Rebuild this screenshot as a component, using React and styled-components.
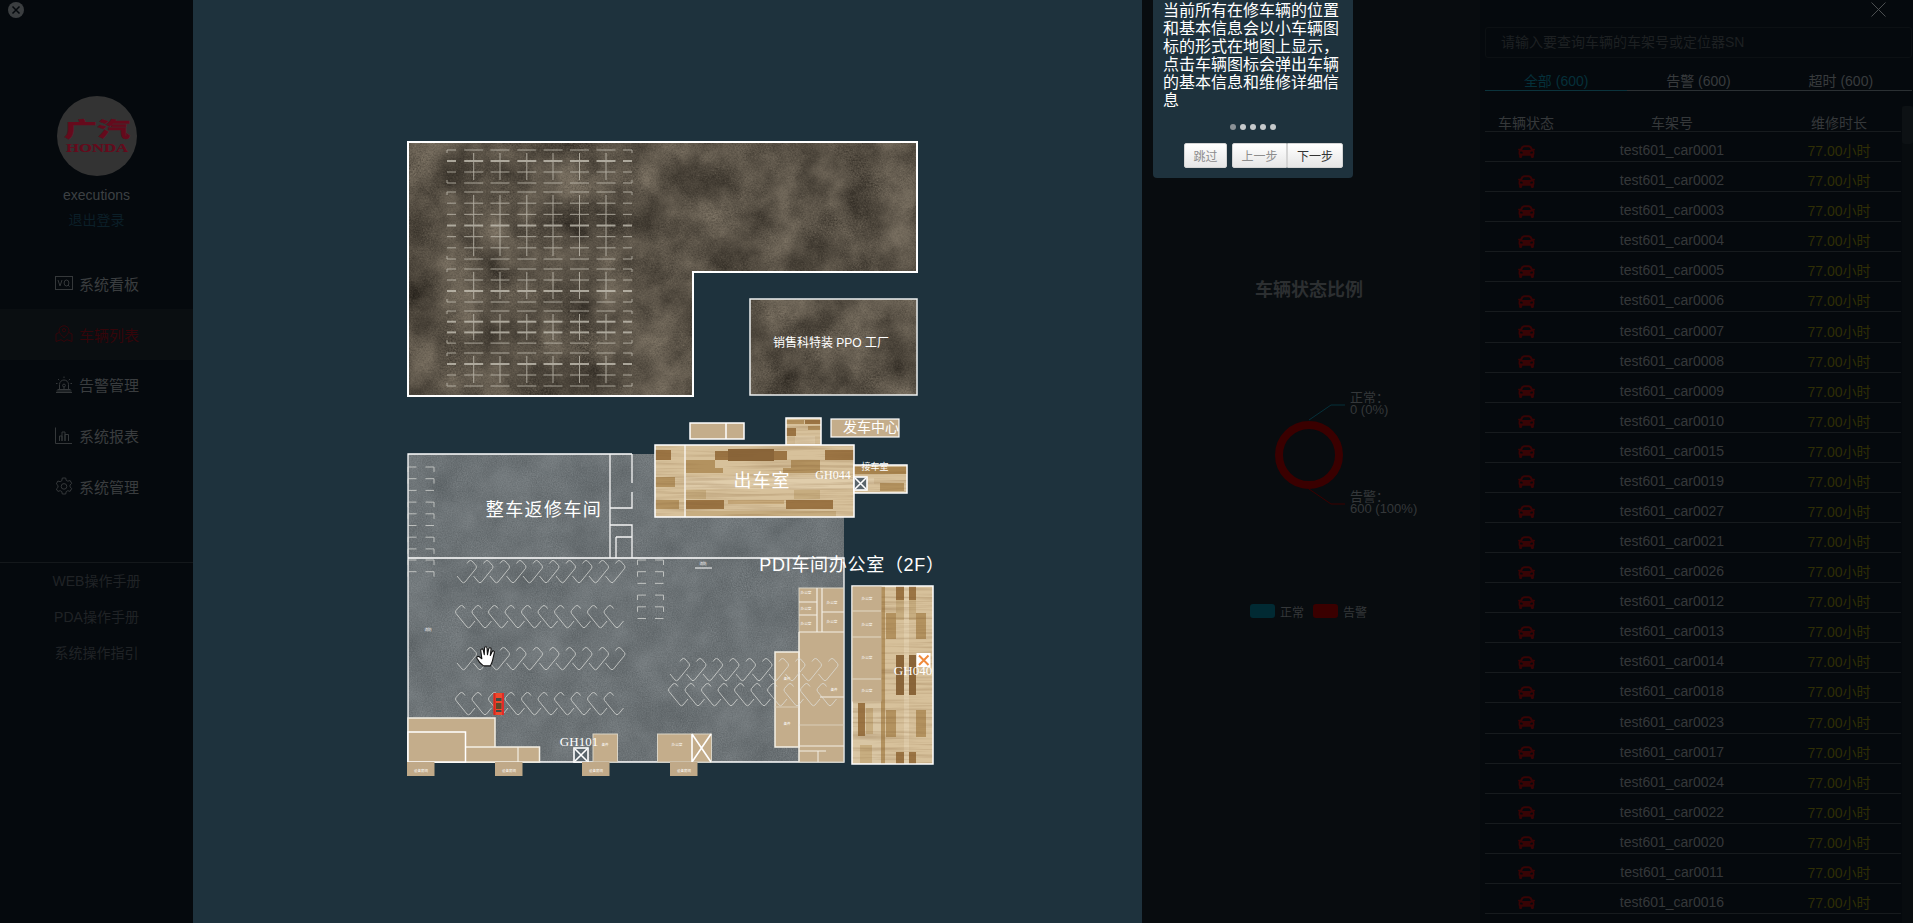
import React from 'react';
import styled, { createGlobalStyle } from 'styled-components';
import { FaCar } from 'react-icons/fa';

const SANS = '"Liberation Sans", "Noto Sans CJK SC", Arial, sans-serif';
const SERIF = '"Liberation Serif", "Noto Sans CJK SC", serif';

const MENU = [
  { label: '系统看板', icon: 'board' },
  { label: '车辆列表', icon: 'pin', active: true },
  { label: '告警管理', icon: 'alarm' },
  { label: '系统报表', icon: 'chart' },
  { label: '系统管理', icon: 'gear' },
];

const MANUALS = ['WEB操作手册', 'PDA操作手册', '系统操作指引'];

const TABS = ['全部 (600)', '告警 (600)', '超时 (600)'];

const CARS = [
  '0001', '0002', '0003', '0004', '0005', '0006', '0007', '0008', '0009', '0010', '0015', '0019', '0027',
  '0021', '0026', '0012', '0013', '0014', '0018', '0023', '0017', '0024', '0022', '0020', '0011', '0016',
];

const GlobalStyle = createGlobalStyle`
  html, body {
    margin: 0;
    padding: 0;
    height: 100%;
    background: #05090d;
    overflow: hidden;
  }
  * { box-sizing: border-box; }
`;

const Page = styled.div`
  position: relative;
  display: flex;
  width: 1913px;
  height: 923px;
  overflow: hidden;
  font-family: ${SANS};
`;

/* ---------- sidebar ---------- */
const Sidebar = styled.aside`
  position: relative;
  flex: 0 0 193px;
  display: flex;
  flex-direction: column;
  align-items: center;
  padding-top: 96px;
  background: #05090d;
`;

const CloseBadge = styled.div`
  position: absolute;
  left: 8px;
  top: 2px;
  width: 16px;
  height: 16px;
  border-radius: 50%;
  background: #3b3e40;
  display: flex;
  align-items: center;
  justify-content: center;
`;

const Avatar = styled.div`
  width: 80px;
  height: 80px;
  border-radius: 50%;
  background: #333333;
`;

const UserName = styled.div`
  margin-top: 9px;
  height: 20px;
  line-height: 20px;
  font-size: 14px;
  color: #3d4144;
`;

const Logout = styled.a`
  margin-top: 5px;
  height: 20px;
  line-height: 20px;
  font-size: 14px;
  color: #0b1f28;
`;

const Menu = styled.nav`
  align-self: stretch;
  margin-top: 28px;
  display: flex;
  flex-direction: column;
`;

const MenuItem = styled.div`
  height: 50.75px;
  padding-left: 55px;
  display: flex;
  align-items: center;
  gap: 6px;
  font-size: 15px;
  color: ${(p) => (p.$active ? '#34050a' : '#3a3d3f')};
  background: ${(p) => (p.$active ? '#0a0e11' : 'transparent')};
`;

const Manuals = styled.div`
  align-self: stretch;
  margin-top: 50px;
  border-top: 1px solid #14181b;
`;

const ManualLink = styled.div`
  height: 36px;
  line-height: 36px;
  text-align: center;
  font-size: 14px;
  color: #202326;
`;

/* ---------- map ---------- */
const MapArea = styled.main`
  flex: 0 0 949px;
  height: 923px;
  background: #1e323d;
`;

const MapSvg = styled.svg`
  display: block;
  width: 949px;
  height: 923px;
`;

const MapLabel = styled.text`
  fill: #fff;
  font-family: ${(p) => (p.$serif ? SERIF : SANS)};
  font-size: ${(p) => p.$size}px;
  letter-spacing: ${(p) => p.$spacing || 0}px;
  text-anchor: middle;
  dominant-baseline: central;
`;

/* ---------- status panel ---------- */
const StatusPanel = styled.section`
  flex: 0 0 338px;
  height: 923px;
  padding-top: 279px;
  display: flex;
  flex-direction: column;
  align-items: center;
  background: #080c0f;
`;

const PanelTitle = styled.h2`
  margin: 0 4px 0 0;
  height: 22px;
  line-height: 22px;
  font-size: 18px;
  font-weight: bold;
  color: #2c2f31;
`;

const ChartSvg = styled.svg`
  display: block;
  margin-top: 19px;
  width: 338px;
  height: 284px;
`;

const ChartText = styled.text`
  fill: #35383a;
  font-family: ${SANS};
  font-size: 13px;
`;

const Legend = styled.div`
  display: flex;
  align-items: center;
  align-self: flex-start;
  margin-left: 108px;
  height: 14px;
`;

const Swatch = styled.span`
  width: 25px;
  height: 14px;
  border-radius: 3px;
  background: ${(p) => p.$color};
`;

const LegendText = styled.span`
  margin: 0 9px 0 5px;
  font-size: 12px;
  color: #35383a;
`;

/* ---------- list panel ---------- */
const ListPanel = styled.section`
  position: relative;
  flex: 0 0 433px;
  height: 923px;
  padding: 27px 1px 0 5px;
  background: #05090d;
`;

const DismissIcon = styled.svg`
  position: absolute;
  right: 27px;
  top: 2px;
  width: 15px;
  height: 15px;
`;

const SearchBox = styled.div`
  height: 31px;
  line-height: 29px;
  padding-left: 15px;
  border: 1px solid #0c1013;
  border-radius: 3px;
  font-size: 14px;
  color: #1d2022;
`;

const TabBar = styled.div`
  display: flex;
  margin-top: 14px;
  border-bottom: 1px solid #2b3033;
`;

const Tab = styled.div`
  flex: 1;
  height: 19px;
  margin-bottom: -1px;
  text-align: center;
  line-height: 18px;
  font-size: 14px;
  color: ${(p) => (p.$active ? '#05303a' : '#383b3d')};
  border-bottom: 1px solid ${(p) => (p.$active ? '#0b333c' : 'transparent')};
`;

const ScrollTrack = styled.div`
  position: absolute;
  right: 0;
  top: 106px;
  bottom: 0;
  width: 11px;
  background: #080c0f;
`;

const ScrollThumb = styled.div`
  height: 38px;
  background: #0d1114;
  border-radius: 3px;
`;

const Table = styled.div`
  width: 416px;
  margin-top: 24px;
`;

const HeadRow = styled.div`
  display: grid;
  grid-template-columns: 82px 210px 124px;
  height: 17px;
  border-bottom: 1px solid #171b1e;
  font-size: 14px;
  line-height: 16px;
  text-align: center;
  color: #35383a;
`;

const Row = styled.div`
  display: grid;
  grid-template-columns: 82px 210px 124px;
  height: 30.09px;
  padding-top: 7px;
  align-items: center;
  border-bottom: 1px solid #171b1e;
  font-size: 14px;
  text-align: center;
  color: #35383a;
`;

const CarCell = styled.div`
  display: flex;
  justify-content: center;
  padding-top: 2px;
  color: #380405;
`;

const Hours = styled.div`
  color: #2f2e05;
`;

/* ---------- guide popover ---------- */
const Popover = styled.div`
  position: absolute;
  left: 1153px;
  top: -20px;
  width: 200px;
  height: 198px;
  padding: 22px 10px 0;
  border-radius: 4px;
  background: #1e323d;
`;

const PopoverText = styled.p`
  margin: 0;
  font-size: 16px;
  line-height: 18px;
  color: #fff;
`;

const Dots = styled.div`
  display: flex;
  justify-content: center;
  gap: 4px;
  margin-top: 14px;
`;

const Dot = styled.span`
  width: 6px;
  height: 6px;
  border-radius: 50%;
  background: ${(p) => (p.$current ? '#8b9196' : '#c6cacc')};
`;

const PopoverActions = styled.div`
  display: flex;
  justify-content: flex-end;
  gap: 5px;
  margin-top: 13px;
`;

const ButtonGroup = styled.div`
  display: flex;
`;

const GuideButton = styled.button`
  height: 25px;
  width: ${(p) => p.$width}px;
  padding: 0;
  font-family: ${SANS};
  font-size: 12px;
  color: ${(p) => (p.$muted ? '#8d8d8d' : '#333')};
  background: linear-gradient(#ffffff, #e6e6e6);
  border: 1px solid #d4d4d4;
  border-radius: ${(p) => p.$radius || '2px'};
`;

/* ---------- sidebar icons ---------- */
function MenuIcon({ name, color }) {
  const line = { fill: 'none', stroke: color, strokeWidth: 1 };
  return (
    <svg width="18" height="18" viewBox="0 0 18 18">
      {name === 'board' && (
        <>
          <rect x="0.5" y="2.5" width="17" height="13" {...line} />
          <path d="M3 6l2 6 2-6" {...line} />
          <ellipse cx="11.5" cy="9" rx="2.4" ry="3" {...line} />
          <path d="M13 11l1.5 1.5" {...line} />
        </>
      )}
      {name === 'pin' && (
        <>
          <path d="M9 .8c-3 0-5 2.2-5 4.8 0 2.6 3 5.4 5 7 2-1.6 5-4.4 5-7 0-2.6-2-4.8-5-4.8z" {...line} />
          <circle cx="9" cy="5.2" r="1.6" {...line} />
          <path d="M4 7.5L1 9v7.5l5-1.8 3 1.8 3-1.8 5 1.8V9l-3-1.5" {...line} />
        </>
      )}
      {name === 'alarm' && (
        <>
          <path d="M4.5 13V8.5a4.5 4.5 0 019 0V13" {...line} />
          <circle cx="9" cy="9.5" r="1.4" {...line} />
          <path d="M9 11v2M2.5 13.5h13M1 16.5h16M1.5 15h15M9 .5v1.5M3 3l1.2 1.2M15 3l-1.2 1.2M1 7.5h1.5M15.5 7.5H17" {...line} />
        </>
      )}
      {name === 'chart' && (
        <path d="M.5 .5v16h16.5M4.5 14V9h2.5v5M7 14V5h3v9M10 14V7.5h3.5V14" {...line} />
      )}
      {name === 'gear' && (
        <>
          <path d="M7.3 1h3.4l.5 2.3 1.6.9 2.3-.7 1.6 2.9-1.7 1.6v1.9l1.7 1.6-1.6 2.9-2.3-.7-1.6.9-.5 2.4H7.3l-.5-2.4-1.6-.9-2.3.7L1.3 12l1.7-1.6V8.5L1.3 6.9l1.6-2.9 2.3.7 1.6-.9z" {...line} />
          <circle cx="9" cy="9.4" r="2.8" {...line} />
        </>
      )}
    </svg>
  );
}

function BrandLogo() {
  return (
    <svg width="80" height="80" viewBox="0 0 80 80">
      <g transform="translate(40 41) scale(1 .62)">
        <text textAnchor="middle" fontFamily='"Noto Sans CJK SC", sans-serif' fontWeight="900" fontSize="33" fill="#650a1c" stroke="#650a1c" strokeWidth=".5" x="0" y="0">
          广汽
        </text>
      </g>
      <text x="9" y="56" textLength="62" lengthAdjust="spacingAndGlyphs" fontFamily={SERIF} fontWeight="bold" fontSize="12" fill="#650a1c" stroke="#650a1c" strokeWidth=".2">
        HONDA
      </text>
    </svg>
  );
}

/* ---------- map drawing parts ---------- */
function Filters() {
  return (
    <defs>
      <filter id="brownFloor" x="0" y="0" width="100%" height="100%" colorInterpolationFilters="sRGB">
        <feTurbulence type="fractalNoise" baseFrequency="0.025" numOctaves="4" seed="4" result="blotch" />
        <feTurbulence type="fractalNoise" baseFrequency="0.6" numOctaves="2" seed="7" result="grain" />
        <feComposite in="blotch" in2="grain" operator="arithmetic" k1="0" k2=".72" k3=".28" k4="0" />
        <feColorMatrix values=".5 0 0 0 .1  .47 0 0 0 .085  .42 0 0 0 .065  0 0 0 0 1" />
      </filter>
      <filter id="concreteFloor" x="0" y="0" width="100%" height="100%" colorInterpolationFilters="sRGB">
        <feTurbulence type="fractalNoise" baseFrequency="0.03" numOctaves="3" seed="9" result="blotch" />
        <feTurbulence type="fractalNoise" baseFrequency="0.8" numOctaves="2" seed="3" result="grain" />
        <feComposite in="blotch" in2="grain" operator="arithmetic" k1="0" k2=".5" k3=".5" k4="0" />
        <feColorMatrix values=".22 0 0 0 .315  .22 0 0 0 .34  .22 0 0 0 .352  0 0 0 0 1" />
      </filter>
      <filter id="woodGrain" x="0" y="0" width="100%" height="100%" colorInterpolationFilters="sRGB">
        <feTurbulence type="fractalNoise" baseFrequency="0.012 0.35" numOctaves="3" seed="2" />
        <feColorMatrix values="0 0 0 0 .5  0 0 0 0 .36  0 0 0 0 .2  .7 0 0 0 -.3" />
      </filter>
      <clipPath id="topHall">
        <path d="M408 142H917V272H693V396H408Z" />
      </clipPath>
      <clipPath id="annex">
        <rect x="750" y="299" width="167" height="96" />
      </clipPath>
      <clipPath id="lowerHall">
        <rect x="408" y="454" width="436" height="308" />
      </clipPath>
    </defs>
  );
}

// straight parking bays, the rows of little H shapes in the top hall
function StraightBays({ y, gaps, step = 11, heavy = [] }) {
  const cols = [473.7, 500, 526.8, 553, 579.5, 606];
  const last = y + gaps * step;
  const parts = [];
  for (let g = 0; g <= gaps; g++) {
    const yy = y + g * step;
    const width = heavy.includes(g) ? 2 : 1;
    cols.forEach((cx) => {
      parts.push(<path key={`${cx}-${g}`} d={`M${cx - 9.5} ${yy}H${cx + 9.5}`} strokeWidth={width} />);
    });
    parts.push(<path key={`l-${g}`} d={`M447 ${yy}H456`} strokeWidth={width} />);
    parts.push(<path key={`r-${g}`} d={`M623 ${yy}H632`} strokeWidth={width} />);
  }
  cols.forEach((cx) => {
    parts.push(<path key={`v-${cx}`} d={`M${cx} ${y + 3}V${last - 3}`} strokeWidth="1" />);
  });
  parts.push(<path key="cl" d={`M447 ${y}V${y + 3}M447 ${last - 3}V${last}`} strokeWidth="1" />);
  parts.push(<path key="cr" d={`M632 ${y}V${y + 3}M632 ${last - 3}V${last}`} strokeWidth="1" />);
  return (
    <g fill="none" stroke="#c9c5b9" opacity=".75">
      {parts}
    </g>
  );
}

// angled parking bays, S shaped hooks. flip=true gives the rows leaning the other way
function AngledBays({ x, y, count, pitch = 16.5, flip }) {
  const width = (count - 1) * pitch + 22;
  const items = [];
  for (let i = 0; i < count; i++) {
    const a = x + i * pitch;
    items.push(
      <path
        key={i}
        d={`M${a + 10} ${y + 3.5}L${a + 8} ${y + 1}Q${a + 6.5} ${y} ${a + 5} ${y + 1}L${a + 1} ${y + 5.5}Q${a} ${y + 7} ${a + 1} ${y + 8.5}L${a + 12} ${y + 22}Q${a + 13.5} ${y + 23.5} ${a + 15} ${y + 22}L${a + 20} ${y + 16}`}
      />
    );
  }
  const transform = flip ? `translate(${2 * x + width} 0) scale(-1 1)` : undefined;
  return (
    <g fill="none" stroke="#dfe0dc" strokeWidth="1" opacity=".72" transform={transform}>
      {items}
    </g>
  );
}

function SideBays({ x, y, count, step = 11.7 }) {
  const items = [];
  for (let i = 0; i <= count; i++) {
    const yy = y + i * step;
    items.push(<path key={i} d={`M${x + 8.5} ${yy}H${x}v${i % 3 === 2 ? 0 : 5}M${x + 17.5} ${yy}H${x + 26}v${i % 3 === 2 ? 0 : 5}`} />);
  }
  return (
    <g fill="none" stroke="#dfe0dc" strokeWidth="1" opacity=".7">
      {items}
    </g>
  );
}

function WoodPatch({ x, y, w, h, blocks, base = '#d7c19b', stroke = '#fff', id }) {
  return (
    <g>
      <clipPath id={id}>
        <rect x={x} y={y} width={w} height={h} />
      </clipPath>
      <g clipPath={`url(#${id})`}>
        <rect x={x} y={y} width={w} height={h} fill={base} />
        {blocks.map((b, i) => (
          <rect key={i} x={b[0]} y={b[1]} width={b[2]} height={b[3]} fill={b[4]} />
        ))}
        <rect x={x} y={y} width={w} height={h} filter="url(#woodGrain)" />
      </g>
      <rect x={x} y={y} width={w} height={h} fill="none" stroke={stroke} strokeWidth="1.5" />
    </g>
  );
}

const DARK = '#9b7443';
const MID = '#b3925f';
const LIGHT = '#e0cdab';

const EXIT_ROOM_WOOD = [
  [715, 451, 72, 9, DARK], [728, 449, 46, 12, '#8a6539'], [655, 450, 16, 10, DARK], [825, 450, 29, 10, DARK],
  [686, 460, 29, 13, MID], [791, 460, 29, 13, MID], [715, 468, 8, 5, MID], [783, 468, 8, 5, MID],
  [686, 477, 168, 12, LIGHT], [655, 477, 20, 10, MID],
  [686, 490, 20, 9, '#c7ad80'], [794, 490, 26, 9, '#c7ad80'],
  [686, 500, 38, 9, DARK], [786, 500, 47, 9, DARK], [655, 500, 24, 9, MID],
  [728, 500, 56, 4, '#c6a879'], [686, 511, 150, 6, '#c7ad80'],
];

const TOWER_WOOD = [
  [896, 586, 8, 14, DARK], [909, 586, 7, 14, DARK], [886, 613, 10, 26, MID], [916, 613, 10, 26, MID],
  [896, 655, 8, 40, '#8a6539'], [909, 655, 7, 40, '#8a6539'], [886, 710, 10, 27, MID], [916, 710, 10, 27, MID],
  [896, 752, 8, 12, DARK], [909, 752, 7, 12, DARK], [904, 586, 5, 178, LIGHT],
  [881, 586, 4, 178, MID], [896, 600, 8, 20, '#c7ad80'], [909, 600, 7, 20, '#c7ad80'],
  [852, 701, 29, 63, '#d9c6a4'], [858, 703, 7, 33, DARK], [866, 708, 7, 26, '#c7ad80'], [860, 745, 12, 18, '#c7ad80'],
];

const TAN = '#c4ad8b';

function TanRoom({ x, y, w, h, line = '#f3efe5', lineWidth = 1.5 }) {
  return <rect x={x} y={y} width={w} height={h} fill={TAN} stroke={line} strokeWidth={lineWidth} />;
}

function CrossBox({ x, y, size = 14 }) {
  return (
    <g fill="none" stroke="#fff" strokeWidth="1.6">
      <rect x={x} y={y} width={size} height={size} fill="#59646b" />
      <path d={`M${x + 1} ${y + 1}L${x + size - 1} ${y + size - 1}M${x + size - 1} ${y + 1}L${x + 1} ${y + size - 1}`} />
    </g>
  );
}

function ParkingMap() {
  return (
    <MapSvg viewBox="193 0 949 923">
      <Filters />

      {/* top hall */}
      <g clipPath="url(#topHall)">
        <rect x="408" y="142" width="509" height="254" filter="url(#brownFloor)" />
      </g>
      <path d="M408 142H917V272H693V396H408Z" fill="none" stroke="#fff" strokeWidth="2" />
      <StraightBays y={150} gaps={3} heavy={[1]} />
      <StraightBays y={192} gaps={6} step={11.17} heavy={[3]} />
      <StraightBays y={269} gaps={3} heavy={[2]} />
      <StraightBays y={311} gaps={3} step={10.7} heavy={[1, 2]} />
      <StraightBays y={353} gaps={3} heavy={[1]} />

      {/* annex */}
      <g clipPath="url(#annex)">
        <rect x="750" y="299" width="167" height="96" filter="url(#brownFloor)" />
      </g>
      <rect x="750" y="299" width="167" height="96" fill="none" stroke="#eef1f1" strokeWidth="1.5" />
      <MapLabel x="831" y="343" $size={12}>销售科特装 PPO 工厂</MapLabel>

      {/* lower hall */}
      <g clipPath="url(#lowerHall)">
        <rect x="408" y="454" width="436" height="308" filter="url(#concreteFloor)" />
      </g>
      <path d="M632 454H408V762H844V558H408" fill="none" stroke="#fff" strokeWidth="1.3" />
      <path d="M610 454V558M632 454V483M632 492V508H610M610 525H632V558M616 537H632M616 537V558" fill="none" stroke="#f4f4f4" strokeWidth="1.3" />
      <SideBays x={408} y={467} count={7} />
      <SideBays x={408} y={560} count={1} />
      <SideBays x={637.5} y={560} count={5} />
      <path d="M695 568H712" stroke="#fff" strokeWidth="1" />
      <MapLabel x="703" y="564" $size={3.6}>消防</MapLabel>
      <MapLabel x="428" y="630" $size={3.6}>消防</MapLabel>

      <AngledBays x={455} y={560} count={10} flip />
      <AngledBays x={455} y={605} count={10} />
      <AngledBays x={455} y={647} count={10} flip />
      <AngledBays x={455} y={692} count={10} />

      {/* rooms on the right of the lower hall */}
      <TanRoom x={799} y={588} w={44.5} h={174} line="#d8d3c6" lineWidth={1} />
      <TanRoom x={775} y={652} w={24} h={95} line="#f3efe5" />
      <path d="M775 707H799M799 725H844" stroke="#d9cdb8" strokeWidth="1" />
      <path d="M799 632V762M799 632H844M799 746H844M799 602H817M799 615H817M822 612H844M820 697H844M817 588V632M822 588V632" stroke="#f3efe5" strokeWidth="1.2" fill="none" />
      <path d="M799 751H826M818 751V762" stroke="#f3efe5" strokeWidth="1" fill="none" />
      <MapLabel x="806" y="593" $size={3.6}>办公室</MapLabel>
      <MapLabel x="806" y="609" $size={3.6}>办公室</MapLabel>
      <MapLabel x="806" y="624" $size={3.6}>办公室</MapLabel>
      <MapLabel x="832" y="603" $size={3.6}>办公室</MapLabel>
      <MapLabel x="832" y="622" $size={3.6}>办公室</MapLabel>
      <MapLabel x="787" y="679" $size={3.6}>备件</MapLabel>
      <MapLabel x="787" y="724" $size={3.6}>备件</MapLabel>
      <MapLabel x="834" y="690" $size={3.6}>备件</MapLabel>
      <AngledBays x={668} y={658} count={10} flip />
      <AngledBays x={668} y={683} count={10} />

      {/* bottom rooms */}
      <TanRoom x={408} y={718} w={87} h={44} line="#f3efe5" />
      <TanRoom x={465} y={747} w={74.5} h={15} />
      <path d="M518 747V762" stroke="#f3efe5" strokeWidth="1.2" />
      <rect x="408" y="732" width="57.5" height="30" fill={TAN} stroke="#fff" strokeWidth="1.5" />
      <TanRoom x={593} y={734} w={24.5} h={28} line="#d8d3c6" lineWidth={1} />
      <MapLabel x="605" y="745" $size={3.6}>备件</MapLabel>
      <TanRoom x={657.5} y={734} w={54} h={28} line="#d8d3c6" lineWidth={1} />
      <path d="M692 734V762M692 734L711 762M711 734L692 762" stroke="#fff" strokeWidth="1.6" fill="none" />
      <MapLabel x="677" y="745" $size={3.6}>办公室</MapLabel>
      <CrossBox x={574} y={748} />
      <MapLabel x="579" y="741" $size={13} $serif>GH101</MapLabel>
      {[407, 495, 582, 670].map((x) => (
        <g key={x}>
          <rect x={x} y={762} width={27.5} height={14} fill="#c0a988" />
          <MapLabel x={x + 14} y={771} $size={3.5}>设备房间</MapLabel>
        </g>
      ))}

      {/* wood rooms */}
      <rect x="690" y="423" width="54" height="16" fill={TAN} stroke="#fff" strokeWidth="1.5" />
      <path d="M726 423V439" stroke="#fff" strokeWidth="1.5" />
      <WoodPatch id="woodSquare" x={786} y={418} w={35} h={27} blocks={[[786, 420, 18, 4, MID], [805, 420, 16, 4, DARK], [786, 428, 10, 8, DARK], [808, 426, 13, 4, MID], [795, 436, 20, 9, LIGHT]]} />
      <rect x="831" y="419" width="68" height="18" fill={TAN} stroke="#fff" strokeWidth="1.2" />
      <MapLabel x="871" y="427" $size={14}>发车中心</MapLabel>
      <WoodPatch id="woodExit" x={655} y={445} w={199} h={72} blocks={EXIT_ROOM_WOOD} />
      <path d="M685 445V517" stroke="#fff" strokeWidth="1.2" />
      <MapLabel x="762" y="481" $size={18} $spacing={1}>出车室</MapLabel>
      <MapLabel x="833" y="475" $size={12} $serif>GH044</MapLabel>
      <WoodPatch id="woodPickup" x={854} y={465} w={53} h={28} blocks={[[854, 467, 53, 7, '#a9854f'], [880, 483, 24, 8, MID], [860, 478, 14, 6, LIGHT]]} />
      <MapLabel x="875" y="467" $size={9}>接车室</MapLabel>
      <CrossBox x={854} y={477} size={13} />
      <MapLabel x="544" y="510" $size={18} $spacing={1.4}>整车返修车间</MapLabel>

      {/* office tower */}
      <WoodPatch id="woodTower" x={852} y={586} w={81} h={178} blocks={TOWER_WOOD} />
      <rect x="852.5" y="586.5" width="29" height="115" fill={TAN} />
      <path d="M852 611H881M852 637H881M852 679H881" stroke="#e2d8c4" strokeWidth="1" />
      <MapLabel x="867" y="599" $size={3.6}>办公室</MapLabel>
      <MapLabel x="867" y="625" $size={3.6}>办公室</MapLabel>
      <MapLabel x="867" y="658" $size={3.6}>办公室</MapLabel>
      <MapLabel x="867" y="691" $size={3.6}>办公室</MapLabel>
      <MapLabel x="913" y="670" $size={13} $serif>GH040</MapLabel>
      <rect x="916.5" y="653" width="14" height="14" fill="#fff" />
      <path d="M919 655.5L928.5 665M928.5 655.5L919 665" stroke="#f08a3c" strokeWidth="2" />
      <MapLabel x="852" y="565" $size={18} $spacing={0.7}>PDI车间办公室（2F）</MapLabel>

      {/* car marker */}
      <rect x="493.5" y="693" width="10.5" height="22" rx="2" fill="#ef4a2c" />
      <rect x="493.5" y="693" width="2" height="22" fill="#d8261f" />
      <rect x="502" y="693" width="2" height="22" fill="#e02a2a" />
      <rect x="496" y="698" width="5.5" height="3" fill="#3f4a44" />
      <rect x="496" y="703" width="5.5" height="6" fill="#5d4a2c" />
      <rect x="496" y="710" width="5.5" height="2" fill="#3f4a44" />

      {/* hand cursor */}
      <g transform="translate(478 667) scale(1.1) translate(-478 -667)">
        <path
          d="M483 666c-1.5-1-5-5-6-7-.5-1.2 1-2.2 2.2-1.3l2.3 1.8-1-7.5c-.2-1.6 1.9-2 2.3-.4l.9 4.2.2-6c0-1.6 2.2-1.6 2.3 0l.4 6 1.1-5.3c.3-1.5 2.3-1.2 2.2.3l-.7 5.8 1.6-3.5c.6-1.3 2.4-.8 2.1.6l-1.6 7c-.4 2-1 3.2-2 5.3z"
          fill="#fff"
          stroke="#111"
          strokeWidth="1"
          strokeLinejoin="round"
        />
      </g>
    </MapSvg>
  );
}

export default function App() {
  return (
    <Page>
      <GlobalStyle />

      <Sidebar>
        <CloseBadge>
          <svg width="10" height="10" viewBox="0 0 10 10">
            <path d="M1.5 1.5l7 7M8.5 1.5l-7 7" stroke="#05090d" strokeWidth="1.5" />
          </svg>
        </CloseBadge>
        <Avatar>
          <BrandLogo />
        </Avatar>
        <UserName>executions</UserName>
        <Logout>退出登录</Logout>
        <Menu>
          {MENU.map((item) => (
            <MenuItem key={item.label} $active={item.active}>
              <MenuIcon name={item.icon} color={item.active ? '#34050a' : '#35383a'} />
              {item.label}
            </MenuItem>
          ))}
        </Menu>
        <Manuals>
          {MANUALS.map((m) => (
            <ManualLink key={m}>{m}</ManualLink>
          ))}
        </Manuals>
      </Sidebar>

      <MapArea>
        <ParkingMap />
      </MapArea>

      <StatusPanel>
        <PanelTitle>车辆状态比例</PanelTitle>
        <ChartSvg viewBox="0 0 338 284">
          {/* panel x starts at 1142, chart y starts at 320 */}
          <circle cx="167" cy="135" r="30" fill="none" stroke="#3a0000" strokeWidth="8" />
          <path d="M167 100L189 85H203" fill="none" stroke="#05303a" />
          <path d="M167 169L189 184H203" fill="none" stroke="#3a0000" />
          <ChartText x="208" y="82">正常：</ChartText>
          <ChartText x="208" y="94">0 (0%)</ChartText>
          <ChartText x="208" y="181">告警：</ChartText>
          <ChartText x="208" y="193">600 (100%)</ChartText>
        </ChartSvg>
        <Legend>
          <Swatch $color="#012a33" />
          <LegendText>正常</LegendText>
          <Swatch $color="#3a0000" />
          <LegendText>告警</LegendText>
        </Legend>
      </StatusPanel>

      <ListPanel>
        <DismissIcon viewBox="0 0 15 15">
          <path d="M.5 .5l14 14M14.5 .5l-14 14" stroke="#4b4e50" strokeWidth="1" fill="none" />
        </DismissIcon>
        <SearchBox>请输入要查询车辆的车架号或定位器SN</SearchBox>
        <TabBar>
          {TABS.map((t, i) => (
            <Tab key={t} $active={i === 0}>{t}</Tab>
          ))}
        </TabBar>
        <ScrollTrack>
          <ScrollThumb />
        </ScrollTrack>
        <Table>
          <HeadRow>
            <div>车辆状态</div>
            <div>车架号</div>
            <div>维修时长</div>
          </HeadRow>
          {CARS.map((c) => (
            <Row key={c}>
              <CarCell>
                <FaCar size={17} />
              </CarCell>
              <div>test601_car{c}</div>
              <Hours>77.00小时</Hours>
            </Row>
          ))}
        </Table>
      </ListPanel>

      <Popover>
        <PopoverText>当前所有在修车辆的位置和基本信息会以小车辆图标的形式在地图上显示，点击车辆图标会弹出车辆的基本信息和维修详细信息</PopoverText>
        <Dots>
          {[0, 1, 2, 3, 4].map((d) => (
            <Dot key={d} $current={d === 0} />
          ))}
        </Dots>
        <PopoverActions>
          <GuideButton $width={43} $muted>跳过</GuideButton>
          <ButtonGroup>
            <GuideButton $width={55} $muted $radius="2px 0 0 2px">上一步</GuideButton>
            <GuideButton $width={56} $radius="0 2px 2px 0">下一步</GuideButton>
          </ButtonGroup>
        </PopoverActions>
      </Popover>
    </Page>
  );
}
